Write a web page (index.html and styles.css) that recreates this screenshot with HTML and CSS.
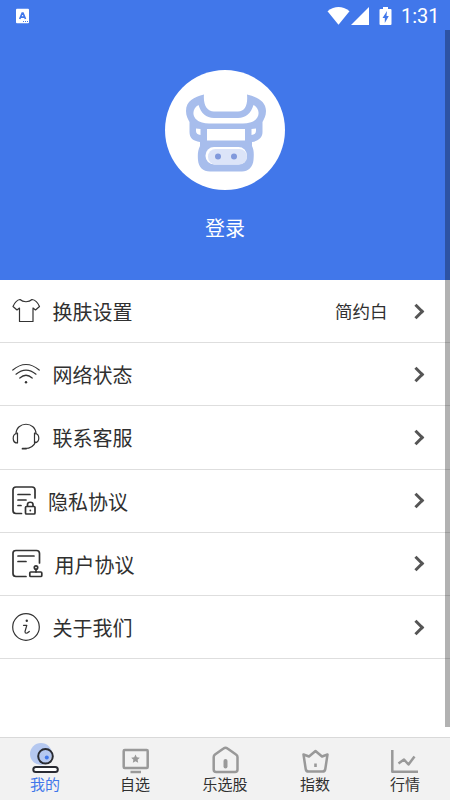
FILE: index.html
```html
<!DOCTYPE html>
<html lang="zh-CN">
<head>
<meta charset="utf-8">
<title>我的</title>
<link rel="stylesheet" href="styles.css">
</head>
<body>
<div class="app">
  <header class="hero">
    <div class="status">
      <svg class="status-app" width="14" height="16" viewBox="15 7 14 16"><rect x="16" y="7.700" width="13" height="14.600" rx="1" fill="#fff"/><path d="M19.700 18 22.200 12h.8l2.500 6M20.700 16.200h3.800" fill="none" stroke="#4177ea" stroke-width="1.700"/><path d="M23 20.500h1m1 0h1m1 0h1" stroke="#4177ea"/></svg>
      <svg class="status-icons" width="68" height="22" viewBox="327 4 68 22" fill="#fff"><path d="M328.500 10.200Q339.500 2 350.500 10.200L339.500 23.800Z"/><path d="M370 6v18h-18Z"/><path fill-rule="evenodd" d="M384 6h5v2h2.500q1 0 1 1v14q0 1-1 1h-10q-1 0-1-1V9q0-1 1-1h2.500ZM388 10l-4.500 7h2.300v5l4-7h-2.300Z"/></svg>
      <span class="clock">1:31</span>
    </div>
    <div class="avatar">
      <svg width="84" height="80" viewBox="184 93 84 80">
        <path fill="#a7bdec" fill-rule="evenodd" d="M204 94.500C203 105 207 111.500 214 111.500H238C245 111.500 248 105 247 94.500C257 97 266 101 266 111C266 116 264 119 262.500 122V132C262.500 138 258 141 252 142V146C254 150 254 154 253.500 160C253 167 248 171.500 242 171.500H210C203 171.500 198.500 167 198 160C197.500 154 198 150 200 146V142C193 141 189.500 138 189.500 132V122C188 119 186 116 186 111C186 101 194 97 204 94.500ZM198.500 105C191 109 191.500 120 202 122.500Q205 123.500 209 123.500H243Q247 123.500 250 122.500C260.500 120 261 109 253.500 105C251 113 246 118 238 118H214C206 118 201 113 198.500 105ZM207 129V140.500H245V129ZM196 128.500V131Q196 134.500 200.500 135V129ZM256 128.500V131Q256 134.500 251.500 135V129Z"/>
        <rect x="205.500" y="147" width="41.500" height="17.500" rx="8.500" fill="#fff"/>
        <rect x="208" y="149" width="39" height="15.500" rx="7.500" fill="#dce4f8"/>
        <circle cx="218" cy="156.500" r="3" fill="#8199dc"/><circle cx="234" cy="156.500" r="3" fill="#8199dc"/>
      </svg>
    </div>
    <div class="login">登录</div>
  </header>
  <main class="menu">
    <div class="row">
      <svg width="34" height="34" viewBox="9 295 34 34"><path d="M20 300.500C23 303.500 29 303.500 32 300.500C36 301 38 304 39.500 307.500L35.500 311L33 309V322.500H19.500V309L17 311L13 307.500C14.500 304 16 301 20 300.500Z"/></svg>
      <span class="label">换肤设置</span><span class="value">简约白</span><i class="chevron"></i>
    </div>
    <div class="row">
      <svg width="34" height="34" viewBox="9 358 34 34"><path d="M12.800 371Q26 360 39.200 371M16 375.200Q26 367 36 375.200M19.800 379Q26 373.500 32.200 379"/><circle class="solid" cx="26" cy="383.300" r="1.200"/></svg>
      <span class="label">网络状态</span><i class="chevron"></i>
    </div>
    <div class="row">
      <svg width="34" height="34" viewBox="9 420 34 34"><path d="M16 434C16 421 36 421 36 434M17.500 433V443C12 443 11.500 434 17.500 433ZM34.500 433V443C40.500 442 40 434 34.500 433ZM35.500 442Q33 448.500 25 448.500"/><path class="bold" d="M22.500 448.700h3.500"/></svg>
      <span class="label">联系客服</span><i class="chevron"></i>
    </div>
    <div class="row privacy">
      <svg width="34" height="34" viewBox="9 484 34 34"><g class="bold"><path d="M21.500 513.500H16Q13 513.500 13 510.500V490Q13 487 16 487H32Q35 487 35 490V498M18 494.500H30M18 500H26M18 505.500H21"/><rect x="25.500" y="506.500" width="9.500" height="7.500" rx="1"/><path d="M27.500 506V504.500C27.500 501.500 33 501.500 33 504.500V506"/></g><circle class="solid" cx="30.300" cy="510.500" r=".9"/></svg>
      <span class="label">隐私协议</span><i class="chevron"></i>
    </div>
    <div class="row terms">
      <svg width="36" height="34" viewBox="9 547 36 34"><g class="bold"><path d="M26 576.500H16Q13 576.500 13 573.500V553Q13 550.500 16 550.500H36.500Q39.500 550.500 39.500 553.500V563M18 556H34M18 561.500H26"/><rect x="29.800" y="572" width="12" height="4.500" rx="1"/><circle cx="36" cy="567.500" r="1.700"/><path d="M36 569.500V572"/></g></svg>
      <span class="label">用户协议</span><i class="chevron"></i>
    </div>
    <div class="row">
      <svg width="34" height="34" viewBox="9 610 34 34"><circle cx="26" cy="627" r="13.300"/><circle class="solid" cx="26.800" cy="620.800" r="1.200"/><path d="M23.500 625.300H26.800L25 631.500Q25 635 29.300 631.500"/></svg>
      <span class="label">关于我们</span><i class="chevron"></i>
    </div>
  </main>
  <nav class="tabs">
    <div class="tab active"><svg width="34" height="34" viewBox="28 741 34 34"><circle cx="41" cy="754" r="11" fill="#b5c8f0" stroke="none"/><g stroke="#292b32" stroke-width="2"><circle cx="45.500" cy="756.300" r="7.300"/><rect x="33.300" y="767" width="24.500" height="5" rx="2.500" fill="#fff"/></g><circle cx="46.800" cy="757.500" r="2" fill="#4177ea" stroke="none"/></svg><span>我的</span></div>
    <div class="tab"><svg width="34" height="34" viewBox="118 741 34 34"><rect x="123.700" y="750" width="24" height="18" rx="1"/><path d="M130.500 772H141"/><path d="M135.500 754.500l1.300 2.800 3 .4-2.200 2.100.6 3-2.700-1.500-2.700 1.500.6-3-2.200-2.100 3-.4Z" fill="#999" stroke="none"/></svg><span>自选</span></div>
    <div class="tab"><svg width="34" height="34" viewBox="208 741 34 34"><path d="M213.700 757Q213.700 755.500 215 754.500L223.500 748.500Q225.500 747 227.500 748.500L236 754.500Q237.500 755.500 237.500 757V769.500Q237.500 772 235 772H216.200Q213.700 772 213.700 769.500Z"/><path d="M225.500 761V766.500" stroke-width="4" stroke-linecap="round"/></svg><span>乐选股</span></div>
    <div class="tab"><svg width="34" height="34" viewBox="298 741 34 34"><path d="M303.500 754.500 309 756.500 315.500 751 322 756.500 327.500 754.500 325.300 769Q325 771.500 322.500 771.500H308.500Q306 771.500 305.700 769Z"/><path d="M315.500 763.500V767" stroke-width="2.600"/></svg><span>指数</span></div>
    <div class="tab"><svg width="34" height="34" viewBox="388 741 34 34"><path d="M392.300 750V771.700H418M398.500 763.500 404 759.500 408.500 764.500 414.500 756.500"/></svg><span>行情</span></div>
  </nav>
  <div class="scrollbar"></div>
</div>
</body>
</html>
```

FILE: styles.css
```css
* { box-sizing: border-box; }
body { margin: 0; background: #fff; color: #303030; font-family: "Noto Sans CJK SC", sans-serif; }
.app { position: relative; width: 450px; height: 800px; display: flex; flex-direction: column; overflow: hidden; }
svg { display: block; flex: none; }
.hero { height: 280px; background: #4177ea; color: #fff; display: flex; flex-direction: column; align-items: center; }
.status { width: 100%; height: 30px; padding: 1px 11px 0 15px; display: flex; align-items: center; }
.status-icons { margin-left: auto; }
.clock { margin-left: 7px; width: 38px; font: 20px/30px Roboto, sans-serif; white-space: nowrap; }
.avatar { width: 120px; height: 120px; margin-top: 40px; border-radius: 50%; background: #fff; display: flex; align-items: center; justify-content: center; padding: 6px 0 0 2px; }
.login { margin-top: 23px; font-size: 20px; line-height: 30px; }
.menu { flex: 1; }
.row { height: 63.2px; border-bottom: 1px solid #dedede; padding: 0 25px 0 9px; display: flex; align-items: center; }
.row svg { fill: none; stroke: #333; stroke-width: 1.2; stroke-linejoin: round; stroke-linecap: round; }
.row .bold { stroke-width: 1.7; }
.row .solid { fill: #333; stroke: none; }
.label { margin-left: 9.5px; margin-right: auto; padding-top: 2px; font-size: 20px; line-height: 30px; }
.privacy .label { margin-left: 5px; }
.value { font-size: 17.5px; line-height: 26px; margin-right: 23px; }
.chevron { width: 11px; height: 11px; margin-right: 3.5px; border: solid #555; border-width: 3px 3px 0 0; transform: rotate(45deg); }
.tabs { height: 63px; background: #f2f2f2; border-top: 1px solid #d9d9d9; display: flex; }
.tab { flex: 1; display: flex; flex-direction: column; align-items: center; padding-top: 3px; font-size: 15px; line-height: 18px; }
.tab svg { fill: none; stroke: #999; stroke-width: 2.5; stroke-linejoin: round; }
.active { color: #4177ea; }
.scrollbar { position: absolute; right: 0; top: 30px; width: 5px; height: 697px; background: rgba(0, 0, 0, .3); }
```
